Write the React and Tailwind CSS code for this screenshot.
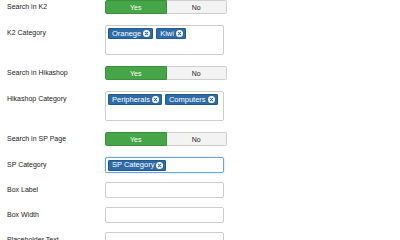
import React from 'react'

const font = { fontFamily: '"Liberation Sans", Arial, sans-serif' }

const Toggle = () => (
    <div className="flex h-[14px] w-[122px]">
        <div className="flex-1 flex items-center justify-center bg-[#46a546] border border-[#3d8f3d] rounded-l-[2px] text-white text-[7px] leading-none">
            Yes
        </div>
        <div className="flex-1 flex items-center justify-center bg-[#f3f3f3] border border-l-0 border-[#cfcfcf] rounded-r-[2px] text-[#222] text-[7px] leading-none">
            No
        </div>
    </div>
)

const Tag = ({ label }) => (
    <div className="flex items-center h-[11px] pl-[3px] pr-[2px] gap-[2px] bg-[#2d6ba7] border border-[#23598c] rounded-[1px] text-white text-[7.5px] leading-none">
        <span>{label}</span>
        <svg width="7" height="7" viewBox="0 0 10 10">
            <circle cx="5" cy="5" r="5" fill="#fff" />
            <path d="M3.2 3.2 L6.8 6.8 M6.8 3.2 L3.2 6.8" stroke="#2d6ba7" strokeWidth="1.5" strokeLinecap="round" />
        </svg>
    </div>
)

const Row = ({ label, children, mb = 'mb-[11px]', lh = 'leading-[16px]' }) => (
    <div className={`flex items-start ${mb}`}>
        <div className={`w-[98px] text-[7px] text-[#222] ${lh}`}>{label}</div>
        {children}
    </div>
)

const Input = () => (
    <div className="h-[16px] w-[119px] border border-[#cccccc] rounded-[2px] bg-white" />
)

const App = () => {
    return (
        <div className="w-[400px] h-[240px] bg-white overflow-hidden pl-[7px]" style={font}>
            <Row label="Search in K2" lh="leading-[14px]">
                <Toggle />
            </Row>
            <Row label="K2 Category">
                <div className="h-[30px] w-[119px] border border-[#cccccc] rounded-[2px] bg-white flex items-start gap-[3px] p-[2px]">
                    <Tag label="Oranege" />
                    <Tag label="Kiwi" />
                </div>
            </Row>
            <Row label="Search in Hikashop" lh="leading-[14px]">
                <Toggle />
            </Row>
            <Row label="Hikashop Category">
                <div className="h-[30px] w-[119px] border border-[#cccccc] rounded-[2px] bg-white flex items-start gap-[3px] p-[2px]">
                    <Tag label="Peripherals" />
                    <Tag label="Computers" />
                </div>
            </Row>
            <Row label="Search in SP Page" lh="leading-[14px]">
                <Toggle />
            </Row>
            <Row label="SP Category" mb="mb-[9px]">
                <div className="h-[16px] w-[119px] border border-[#6aa5dc] rounded-[2px] bg-white flex items-center px-[2px] shadow-[0_0_2px_rgba(82,168,236,0.5)]">
                    <Tag label="SP Category" />
                </div>
            </Row>
            <Row label="Box Label" mb="mb-[9px]">
                <Input />
            </Row>
            <Row label="Box Width" mb="mb-[9px]">
                <Input />
            </Row>
            <Row label="Placeholder Text" mb="mb-[9px]">
                <Input />
            </Row>
        </div>
    )
}

export default App
